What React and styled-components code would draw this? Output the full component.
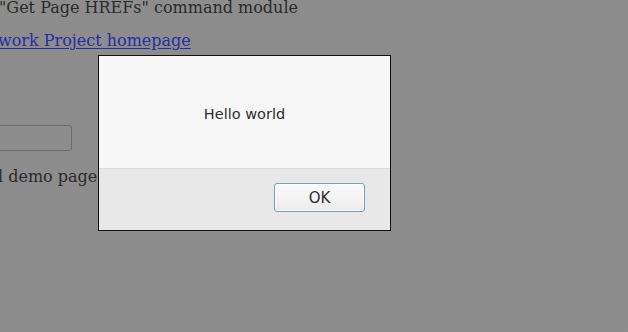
import React from "react";
import styled, { createGlobalStyle } from "styled-components";

const GlobalStyle = createGlobalStyle`
  html, body {
    margin: 0;
    padding: 0;
    width: 628px;
    height: 332px;
    overflow: hidden;
  }
  body {
    background: #8c8c8c;
    font-family: "DejaVu Serif", serif;
  }
`;

const Page = styled.div`
  position: relative;
  width: 628px;
  height: 332px;
  overflow: hidden;
  background-color: #8d8d8d;
  background-image: repeating-conic-gradient(#8f8f8f 0 25%, #8a8a8a 0 50%);
  background-size: 2px 2px;
`;

const Content = styled.div`
  display: flex;
  flex-direction: column;
  align-items: flex-start;
  font-size: 16px;
  line-height: 18.6px;
  color: #2a2a2a;
`;

const Line = styled.div`
  margin-left: ${({ $shift }) => $shift || 0}px;
  margin-top: ${({ $top }) => $top || 0}px;
  line-height: ${({ $lh }) => ($lh ? `${$lh}px` : "inherit")};
  white-space: nowrap;
`;

const Link = styled.a`
  color: #2b2ba6;
  text-decoration: underline;
  text-underline-offset: 2px;
`;

const Field = styled.div`
  margin-top: ${({ $top }) => $top}px;
  margin-left: -80px;
  width: 150px;
  height: 24px;
  border: 1px solid #6b6b6b;
  border-radius: 3px;
`;

const Dialog = styled.div`
  position: absolute;
  left: 98px;
  top: 55px;
  width: 291px;
  height: 174px;
  border: 1px solid #111;
  display: flex;
  flex-direction: column;
  font-family: "DejaVu Sans", sans-serif;
  color: #2e2e2e;
`;

const Message = styled.div`
  height: 113px;
  background: #f7f7f7;
  border-bottom: 1px solid #dcdcdc;
  display: flex;
  justify-content: center;
  align-items: center;
  font-size: 14.5px;
  padding-top: 3px;
  box-sizing: border-box;
`;

const Footer = styled.div`
  flex: 1;
  background: #e8e8e8;
  display: flex;
  justify-content: flex-end;
  align-items: flex-start;
  padding: 14px 25px 0 0;
`;

const Button = styled.button`
  width: 91px;
  height: 29px;
  border: 1px solid #7c9fbd;
  border-radius: 3px;
  background: linear-gradient(#fbfbfb, #ececec);
  box-shadow: inset 0 0 0 1px rgba(255, 255, 255, 0.6);
  font-family: "DejaVu Sans", sans-serif;
  font-size: 15px;
  color: #2e2e2e;
  padding: 0;
`;

export default function App() {
  return (
    <>
      <GlobalStyle />
      <Page>
        <Content>
          <Line $shift={-1} $lh={16}>"Get Page HREFs" command module</Line>
          <Line $shift={-2} $top={16}>
            <Link href="#">work Project homepage</Link>
          </Line>
          <Field $top={74.4} />
          <Line $shift={-2} $top={17}>l demo page</Line>
        </Content>
        <Dialog>
          <Message>Hello world</Message>
          <Footer>
            <Button>OK</Button>
          </Footer>
        </Dialog>
      </Page>
    </>
  );
}
